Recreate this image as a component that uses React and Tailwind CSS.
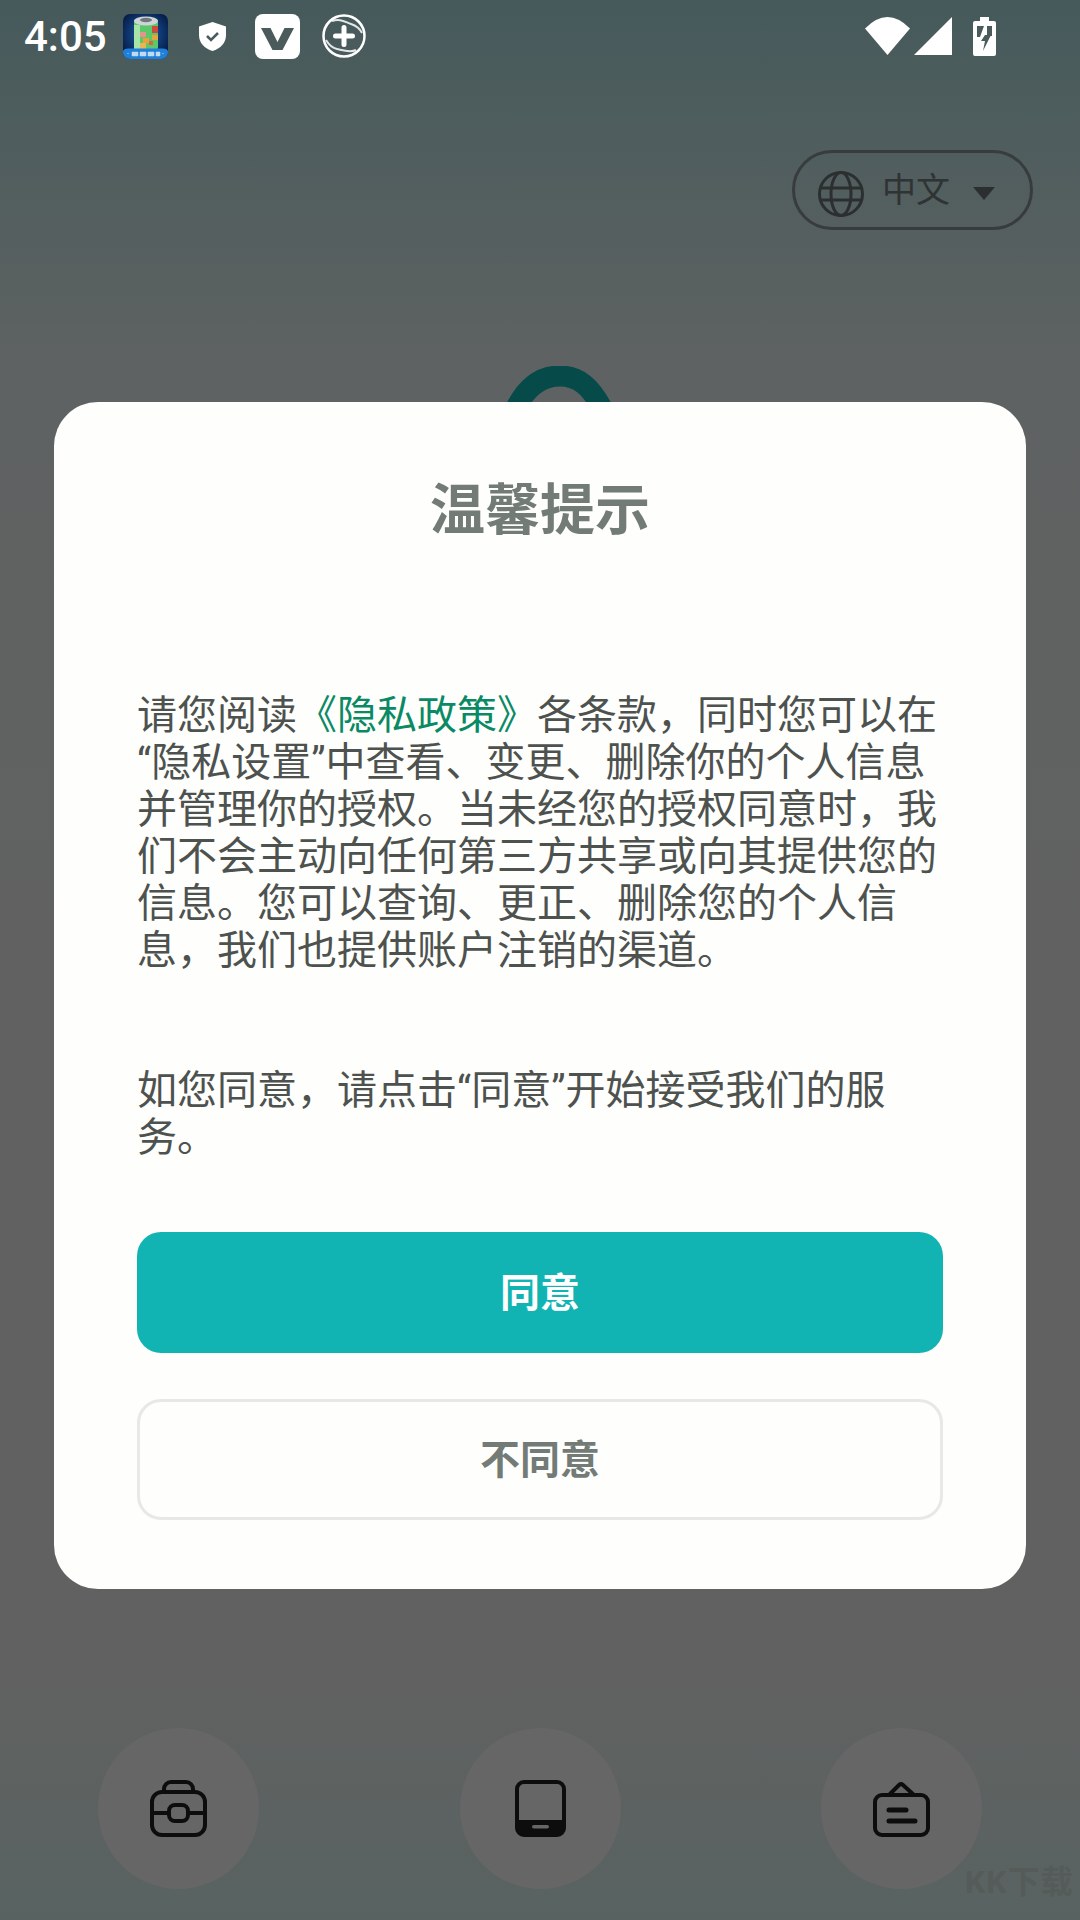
import React from 'react';

const cjk = 'font-[Roboto,"Noto_Sans_CJK_SC",sans-serif]';

function BatteryApp() {
  return (
    <svg width="45" height="45" viewBox="0 0 45 45">
      <defs>
        <radialGradient id="bg" cx="50%" cy="45%" r="62%">
          <stop offset="0%" stopColor="#1b62b0" />
          <stop offset="100%" stopColor="#061a44" />
        </radialGradient>
      </defs>
      <rect width="45" height="45" rx="7" fill="url(#bg)" />
      <rect x="11" y="6" width="24" height="30" rx="3" fill="#5cc86c" />
      <rect x="11" y="11" width="6" height="24" fill="#a5e5a8" />
      <ellipse cx="23" cy="7" rx="12" ry="4.500" fill="#cfd4d6" />
      <ellipse cx="23" cy="6" rx="6" ry="2.200" fill="#6f777c" />
      <rect x="29" y="12" width="6" height="7" fill="#cf4a3d" />
      <rect x="17" y="18" width="6" height="5" fill="#e9938d" />
      <rect x="29" y="21" width="6" height="5" fill="#e6a53a" />
      <rect x="20" y="24" width="6" height="5" fill="#e8a43a" />
      <rect x="26" y="27" width="4" height="4" fill="#d9653a" />
      <rect x="17" y="29" width="6" height="6" fill="#ecb553" />
      <path d="M0 38c0-3 3-3.500 6-3.500h33c3 0 6 .5 6 3.500 0 4-3 7-7 7H7c-4 0-7-3-7-7z" fill="#1f80da" />
      <path d="M4 39.500h2M9 38h6v4H9zM17 38h6v4h-6zM25 38h6v4h-6zM33 38h4v4h-4zM39 39.500h2" fill="#e7f2fb" stroke="#e7f2fb" strokeWidth=".5" opacity=".8" />
    </svg>
  );
}

function Shield() {
  return (
    <svg width="27" height="29" viewBox="0 0 27 29">
      <path d="M13.500 0 27 4.500V13c0 8-5.500 13.500-13.500 16C5.500 26.500 0 21 0 13V4.500z" fill="#fff" />
      <path d="m8 14 4 4 7-7" fill="none" stroke="#4b5b5b" strokeWidth="2.500" />
    </svg>
  );
}

function VBadge() {
  return (
    <svg width="45" height="45" viewBox="0 0 45 45">
      <rect width="45" height="45" rx="8" fill="#fff" />
      <path d="M6 14h9.500l7 14 7-14H39L27.500 36h-10z" fill="#4b5b5b" />
    </svg>
  );
}

function PlusRing() {
  return (
    <svg width="44" height="44" viewBox="0 0 44 44" fill="none" stroke="#fff">
      <circle cx="22" cy="22" r="20.500" strokeWidth="2.500" />
      <path d="M10 7c8-3 13 1 19 3s9 5 11 9M4 26c3 5 6 8 11 9s13 4 19 1" strokeWidth="2" opacity=".85" />
      <path d="M22 13.500v17M13.500 22h17" strokeWidth="5" strokeLinecap="round" />
    </svg>
  );
}

function Wifi() {
  return (
    <svg width="45" height="38" viewBox="0 0 45 38">
      <path d="M22.500 38 0 11.500Q22.500-11.500 45 11.500z" fill="#fff" />
    </svg>
  );
}

function Signal() {
  return (
    <svg width="38" height="38" viewBox="0 0 38 38">
      <path d="M38 0v38H0z" fill="#fff" />
    </svg>
  );
}

function Battery() {
  return (
    <svg width="23" height="39" viewBox="0 0 23 39">
      <path d="M7 0h9v4h5a2 2 0 0 1 2 2v31a2 2 0 0 1-2 2H2a2 2 0 0 1-2-2V6a2 2 0 0 1 2-2h5z" fill="#fff" />
      <path d="M4 9h7L7 20H4zM14 9h5v10h-5z" fill="#4b5b5b" />
      <path d="M12 18h6L10 34l2-10H8z" fill="#4b5b5b" />
    </svg>
  );
}

function Globe() {
  return (
    <svg width="46" height="46" viewBox="0 0 46 46" fill="none" stroke="#2c2f2f" strokeWidth="3">
      <circle cx="23" cy="23" r="21.500" />
      <ellipse cx="23" cy="23" rx="10" ry="21.500" />
      <path d="M2 17h42M2 29h42" />
    </svg>
  );
}

function Toolbox() {
  return (
    <svg width="57" height="57" viewBox="0 0 57 57" fill="none" stroke="#0d0d0d" strokeWidth="4">
      <path d="M14 12V9a7 7 0 0 1 7-7h15a7 7 0 0 1 7 7v3" />
      <rect x="2" y="12" width="53" height="43" rx="10" />
      <path d="M2 33h17M38 33h17" />
      <rect x="19" y="25" width="19" height="16" rx="6" />
    </svg>
  );
}

function Tablet() {
  return (
    <svg width="51" height="57" viewBox="0 0 51 57">
      <rect x="2" y="2" width="47" height="53" rx="7" fill="none" stroke="#0d0d0d" strokeWidth="4" />
      <path d="M2 40h47v8a7 7 0 0 1-7 7H9a7 7 0 0 1-7-7z" fill="#0d0d0d" />
      <rect x="17" y="45" width="17" height="3.500" rx="1.750" fill="#666" />
    </svg>
  );
}

function Board() {
  return (
    <svg width="57" height="56" viewBox="0 0 57 56" fill="none" stroke="#0d0d0d" strokeWidth="4" strokeLinecap="round">
      <rect x="2" y="14" width="53" height="40" rx="7" />
      <path d="m16 14 10-10a3 3 0 0 1 4 0l11 10" />
      <path d="M16 29h17M16 40h26" strokeWidth="5" />
    </svg>
  );
}

function Circle({ children }) {
  return (
    <div className="flex h-[161px] w-[161px] items-center justify-center rounded-full bg-[#666666]">
      {children}
    </div>
  );
}

export default function App() {
  return (
    <div className={`relative flex h-[1920px] w-[1080px] flex-col overflow-hidden bg-[linear-gradient(180deg,#465a5b_0px,#5f6262_380px,#616161_1000px,#616161_1680px,#586361_1920px)] ${cjk}`}>
      {/* status bar */}
      <div className="flex h-[72px] items-center justify-between pl-[24px] pr-[84px]">
        <div className="flex items-center">
          <span className="mt-[2px] w-[99px] text-[42px] font-medium leading-none text-white">4:05</span>
          <BatteryApp />
          <div className="ml-[31px]"><Shield /></div>
          <div className="ml-[29px]"><VBadge /></div>
          <div className="ml-[22px]"><PlusRing /></div>
        </div>
        <div className="flex items-center">
          <Wifi />
          <div className="ml-[4px]"><Signal /></div>
          <div className="ml-[21px]"><Battery /></div>
        </div>
      </div>

      {/* language picker */}
      <div className="mt-[78px] flex justify-end pr-[47px]">
        <div className="flex h-[80px] w-[241px] items-center rounded-full border-[3px] border-[#383c3c] pl-[23px]">
          <div className="mt-[7px]"><Globe /></div>
          <span className="ml-[18px] text-[34px] leading-none text-[#2f3333]">中文</span>
          <div className="ml-[23px] mt-[6px] h-0 w-0 border-x-[11px] border-t-[13px] border-x-transparent border-t-[#2c2f2f]" />
        </div>
      </div>

      {/* logo behind the dialog */}
      <svg className="absolute left-[507px] top-[366px]" width="106" height="40" viewBox="0 0 106 40" fill="none">
        <path d="M9 42C20 20 35 10 53 10s30 10 42 32" stroke="#064b4a" strokeWidth="21" />
      </svg>

      {/* bottom shortcuts */}
      <div className="mt-auto mb-[31px] flex justify-between px-[98px]">
        <Circle><Toolbox /></Circle>
        <Circle><Tablet /></Circle>
        <Circle><Board /></Circle>
      </div>

      {/* watermark */}
      <span className="absolute left-[965px] top-[1864px] whitespace-nowrap text-[32px] font-bold leading-[36px] tracking-[1px] text-[#555b59]">KK下载</span>

      {/* privacy dialog */}
      <div className="absolute left-[54px] top-[402px] flex h-[1187px] w-[972px] flex-col rounded-[44px] bg-[#fefefd] px-[83px]">
        <h1 className="mt-[76px] text-center text-[55px] font-bold leading-[64px] text-[#737b77]">温馨提示</h1>
        <p className="mt-[150px] text-[40px] leading-[47px] text-[#4d524f]">
          请您阅读<span className="text-[#0a8a64]">《隐私政策》</span>各条款，同时您可以在<br />
          “隐私设置”中查看、变更、删除你的个人信息<br />
          并管理你的授权。当未经您的授权同意时，我<br />
          们不会主动向任何第三方共享或向其提供您的<br />
          信息。您可以查询、更正、删除您的个人信<br />
          息，我们也提供账户注销的渠道。
        </p>
        <p className="mt-[93px] text-[40px] leading-[47px] text-[#4d524f]">
          如您同意，请点击“同意”开始接受我们的服务。
        </p>
        <button className="mt-[71px] h-[121px] w-full rounded-[24px] bg-[#12b4b3] pt-[2px] text-[40px] font-bold text-white">同意</button>
        <button className="mt-[46px] h-[121px] w-full rounded-[24px] border-[3px] border-[#e8e8e7] pt-[2px] text-[40px] font-bold text-[#737b77]">不同意</button>
      </div>
    </div>
  );
}
